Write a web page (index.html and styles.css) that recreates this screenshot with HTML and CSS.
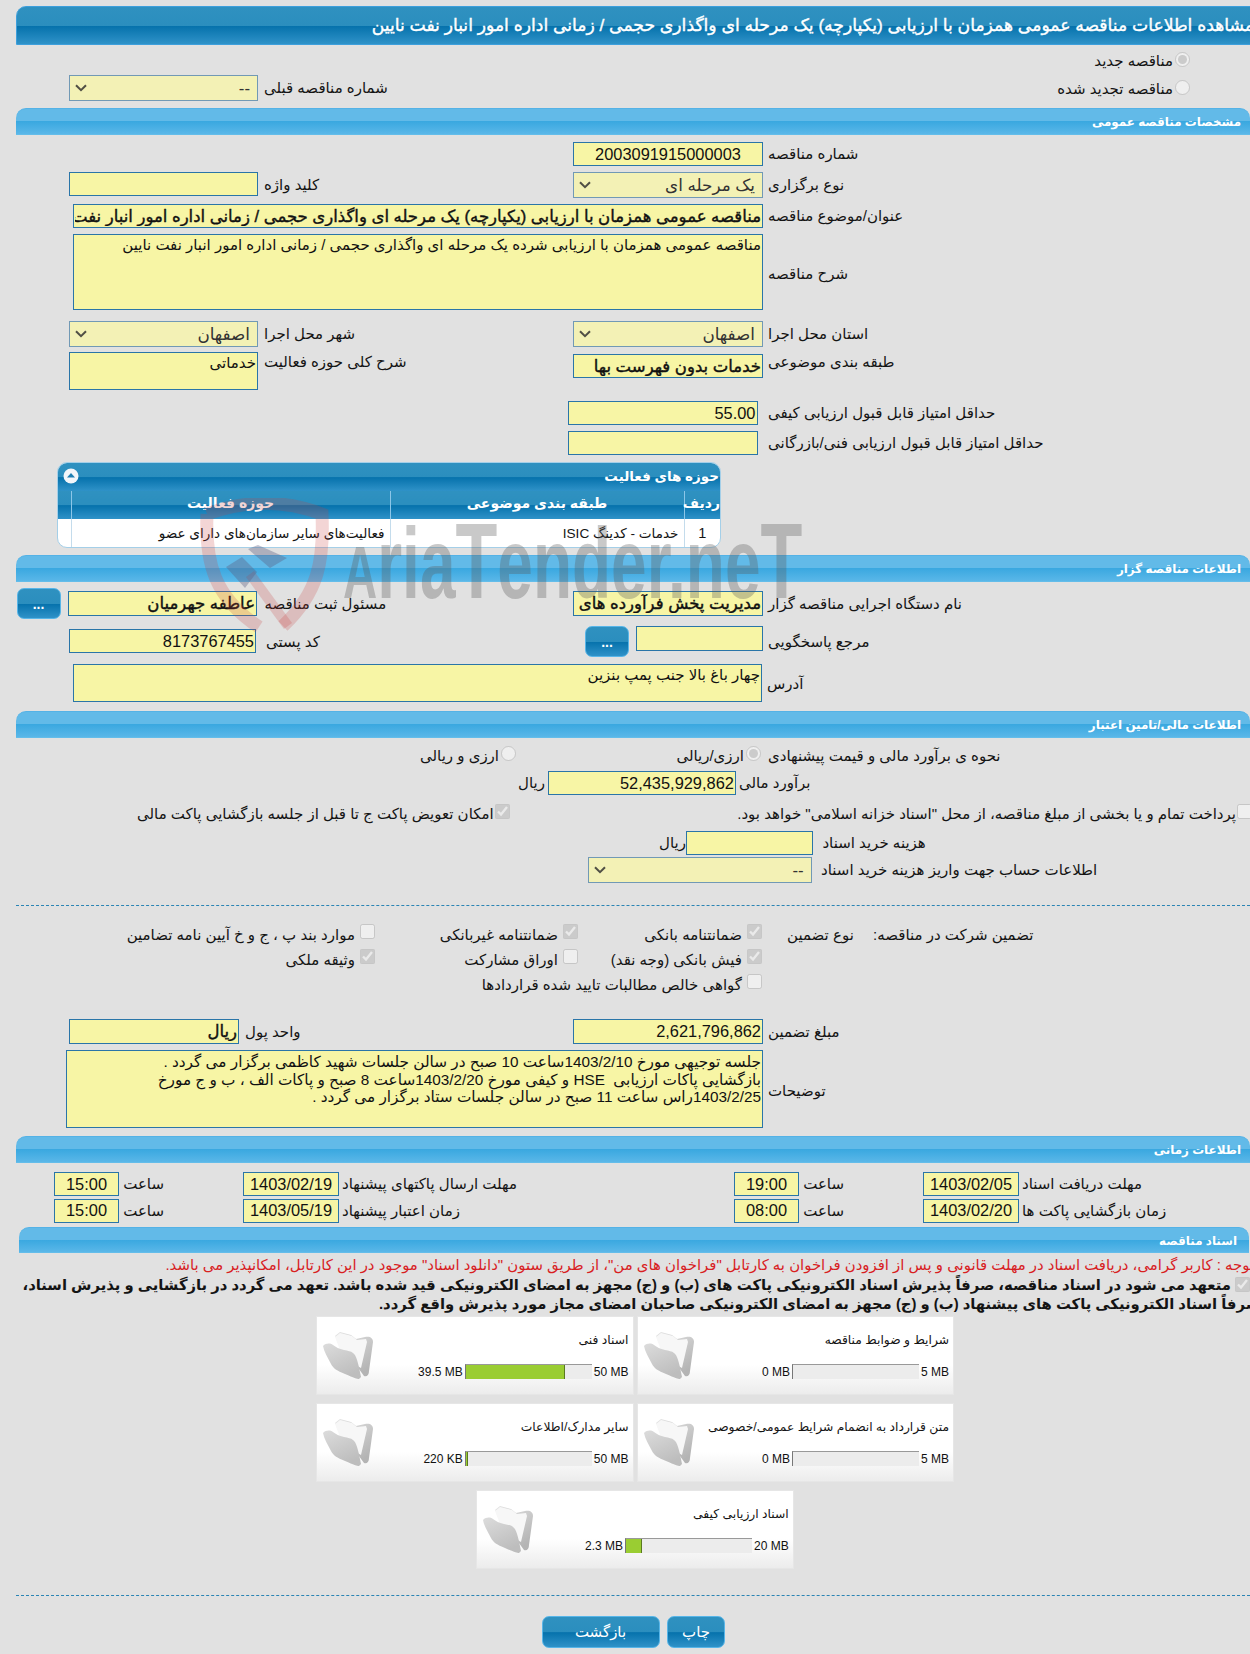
FILE: index.html
```html
<!DOCTYPE html>
<html lang="fa" dir="rtl">
<head>
<meta charset="utf-8">
<title>مشاهده اطلاعات مناقصه</title>
<link rel="stylesheet" href="styles.css">
</head>
<body>
<div class="page">
  <h1 class="topbar">مشاهده اطلاعات مناقصه عمومی همزمان با ارزیابی (یکپارچه) یک مرحله ای واگذاری حجمی / زمانی اداره امور انبار نفت نایین</h1>

  <div class="row r-radio1">
    <div class="cell pr-radio"><input type="radio" disabled checked><span class="lab">مناقصه جدید</span></div>
  </div>
  <div class="row r-radio2">
    <div class="cell pr-radio up"><input type="radio" disabled><span class="lab">مناقصه تجدید شده</span></div>
    <div class="cell left"><span class="lab">شماره مناقصه قبلی</span><select class="sel w189" disabled><option>--</option></select></div>
  </div>

  <h2 class="bar">مشخصات مناقصه عمومی</h2>
  <div class="row mt7 h24">
    <div class="cell right"><span class="lab">شماره مناقصه</span><input class="in w190 c" readonly value="2003091915000003"></div>
  </div>
  <div class="row mt6 h26">
    <div class="cell right"><span class="lab">نوع برگزاری</span><select class="sel w190" disabled><option>یک مرحله ای</option></select></div>
    <div class="cell left top"><span class="lab lab-k">کلید واژه</span><input class="in w189" readonly></div>
  </div>
  <div class="row mt6 h24">
    <div class="cell wide"><span class="lab">عنوان/موضوع مناقصه</span><input class="in w690 b" readonly value="مناقصه عمومی همزمان با ارزیابی (یکپارچه) یک مرحله ای واگذاری حجمی / زمانی اداره امور انبار نفت نایین"></div>
  </div>
  <div class="row mt6 h76">
    <div class="cell wide"><span class="lab lab-d">شرح مناقصه</span><textarea class="in w690 ta" readonly>مناقصه عمومی همزمان با ارزیابی شرده یک مرحله ای واگذاری حجمی / زمانی اداره امور انبار نفت نایین</textarea></div>
  </div>
  <div class="row mt11 h26">
    <div class="cell right"><span class="lab">استان محل اجرا</span><select class="sel w190" disabled><option>اصفهان</option></select></div>
    <div class="cell left"><span class="lab">شهر محل اجرا</span><select class="sel w189" disabled><option>اصفهان</option></select></div>
  </div>
  <div class="row mt5 h38">
    <div class="cell right top"><span class="lab lab-t">طبقه بندی موضوعی</span><input class="in w190 b ofs2" readonly value="خدمات بدون فهرست بها"></div>
    <div class="cell left top"><span class="lab lab-t">شرح کلی حوزه فعالیت</span><textarea class="in w189 h38 ta" readonly>خدماتی</textarea></div>
  </div>
  <div class="row mt11 h24">
    <div class="cell right nudge"><span class="lab">حداقل امتیاز قابل قبول ارزیابی کیفی</span><input class="in w190" readonly value="55.00"></div>
  </div>
  <div class="row mt5 h25">
    <div class="cell right nudge"><span class="lab">حداقل امتیاز قابل قبول ارزیابی فنی/بازرگانی</span><input class="in w190" readonly></div>
  </div>

  <section class="panel">
    <div class="panel-head">
      <span>حوزه های فعالیت</span>
      <svg class="toggle" viewBox="0 0 16 16" width="16" height="16"><circle cx="8" cy="8" r="7.5" fill="#f2f6fa"/><path d="M4 9.5 8 5l4 4.5z" fill="#1f7fb3"/></svg>
    </div>
    <table class="grid">
      <colgroup><col class="c1"><col class="c2"><col class="c3"><col></colgroup>
      <thead><tr><th>ردیف</th><th>طبقه بندی موضوعی</th><th>حوزه فعالیت</th><th></th></tr></thead>
      <tbody><tr><td class="mid">1</td><td>خدمات - کدینگ ISIC</td><td>فعالیت‌های سایر سازمان‌های دارای عضو</td><td></td></tr></tbody>
    </table>
  </section>

  <h2 class="bar mt7">اطلاعات مناقصه گزار</h2>
  <div class="row mt6 h31">
    <div class="cell right"><span class="lab">نام دستگاه اجرایی مناقصه گزار</span><input class="in w190 h25 b" readonly value="مدیریت پخش فرآورده های نفتی اصفهان"></div>
    <div class="cell left btnpad"><span class="lab">مسئول ثبت مناقصه</span><input class="in w189 h25 b" readonly value="عاطفه جهرمیان"><button class="btn dots">...</button></div>
  </div>
  <div class="row mt7 h32">
    <div class="cell right top resp"><span class="lab lab-m">مرجع پاسخگویی</span><input class="in w127 h25" readonly><button class="btn dots">...</button></div>
    <div class="cell left top"><span class="lab lab-m2">کد پستی</span><input class="in w187 ofs3" readonly value="8173767455"></div>
  </div>
  <div class="row mt6 h38">
    <div class="cell wide"><span class="lab lab-a">آدرس</span><textarea class="in w689 h38 ta" readonly>چهار باغ بالا جنب پمپ بنزین</textarea></div>
  </div>

  <h2 class="bar mt9">اطلاعات مالی/تامین اعتبار</h2>
  <div class="row s500 mt6 h24">
    <div class="cell c-est"><span class="lab">نحوه ی برآورد مالی و قیمت پیشنهادی</span><span class="opt o-a"><input type="radio" disabled checked><span class="lab">ارزی/ریالی</span></span></div>
    <div class="cell c-est2"><span class="opt"><input type="radio" disabled><span class="lab">ارزی و ریالی</span></span></div>
  </div>
  <div class="row s500 mt3 h24">
    <div class="cell c-fin"><span class="lab">برآورد مالی</span><input class="in w188" readonly value="52,435,929,862"><span class="lab">ریال</span></div>
  </div>
  <div class="row s520 mt6 h26">
    <div class="cell c-pay"><input type="checkbox" disabled><span class="lab">پرداخت تمام و یا بخشی از مبلغ مناقصه، از محل "اسناد خزانه اسلامی" خواهد بود.</span></div>
    <div class="cell c-swap"><input type="checkbox" disabled checked><span class="lab">امکان تعویض پاکت ج تا قبل از جلسه بازگشایی پاکت مالی</span></div>
  </div>
  <div class="row s500 mt3 h25">
    <div class="cell c-doc"><span class="lab">هزینه خرید اسناد</span><input class="in w127" readonly><span class="lab">ریال</span></div>
  </div>
  <div class="row s500 mt2 h26">
    <div class="cell c-acc"><span class="lab">اطلاعات حساب جهت واریز هزینه خرید اسناد</span><select class="sel w224" disabled><option>--</option></select></div>
  </div>
  <hr class="dash d1">

  <div class="guar">
    <span class="lab g1">تضمین شرکت در مناقصه:</span>
    <span class="lab g2">نوع تضمین</span>
    <label class="chk"><input type="checkbox" disabled checked><span class="lab">ضمانتنامه بانکی</span></label>
    <label class="chk"><input type="checkbox" disabled checked><span class="lab">ضمانتنامه غیربانکی</span></label>
    <label class="chk"><input type="checkbox" disabled><span class="lab">موارد بند پ ، ج و خ آیین نامه تضامین</span></label>
    <span></span><span></span>
    <label class="chk"><input type="checkbox" disabled checked><span class="lab">فیش بانکی (وجه نقد)</span></label>
    <label class="chk"><input type="checkbox" disabled><span class="lab">اوراق مشارکت</span></label>
    <label class="chk"><input type="checkbox" disabled checked><span class="lab">وثیقه ملکی</span></label>
    <span></span><span></span>
    <label class="chk span3"><input type="checkbox" disabled><span class="lab">گواهی خالص مطالبات تایید شده قراردادها</span></label>
  </div>

  <div class="row mt22 h25">
    <div class="cell right"><span class="lab">مبلغ تضمین</span><input class="in w190 h25" readonly value="2,621,796,862"></div>
    <div class="cell left"><span class="lab">واحد پول</span><input class="in w170 h25 b" readonly value="ریال"></div>
  </div>
  <div class="row mt6 h78">
    <div class="cell wide tall"><span class="lab">توضیحات</span><textarea class="in w697 ta ta2" readonly>جلسه توجیهی مورخ 1403/2/10ساعت 10 صبح در سالن جلسات شهید کاظمی برگزار می گردد .
بازگشایی پاکات ارزیابی  HSE و کیفی مورخ 1403/2/20ساعت 8 صبح و پاکات الف ، ب و ج مورخ
1403/2/25راس ساعت 11 صبح در سالن جلسات ستاد برگزار می گردد .</textarea></div>
  </div>

  <h2 class="bar mt8">اطلاعات زمانی</h2>
  <div class="row s700 mt9 h24">
    <div class="cell tr"><span class="lab">مهلت دریافت اسناد</span><input class="in date" readonly value="1403/02/05"><span class="lab saat">ساعت</span><input class="in time" readonly value="19:00"></div>
    <div class="cell tl"><span class="lab">مهلت ارسال پاکتهای پیشنهاد</span><input class="in date" readonly value="1403/02/19"><span class="lab saat">ساعت</span><input class="in time" readonly value="15:00"></div>
  </div>
  <div class="row s700 mt2 h25">
    <div class="cell tr"><span class="lab">زمان بازگشایی پاکت ها</span><input class="in date" readonly value="1403/02/20"><span class="lab saat">ساعت</span><input class="in time" readonly value="08:00"></div>
    <div class="cell tl"><span class="lab">زمان اعتبار پیشنهاد</span><input class="in date" readonly value="1403/05/19"><span class="lab saat">ساعت</span><input class="in time" readonly value="15:00"></div>
  </div>

  <h2 class="bar bar-doc">اسناد مناقصه</h2>
  <p class="notice">توجه : کاربر گرامی، دریافت اسناد در مهلت قانونی و پس از افزودن فراخوان به کارتابل "فراخوان های من"، از طریق ستون "دانلود اسناد" موجود در این کارتابل، امکانپذیر می باشد.</p>
  <p class="pledge"><input type="checkbox" disabled checked> متعهد می شود در اسناد مناقصه، صرفاً پذیرش اسناد الکترونیکی پاکت های (ب) و (ج) مجهز به امضای الکترونیکی قید شده باشد. تعهد می گردد در بازگشایی و پذیرش اسناد،<br>صرفاً اسناد الکترونیکی پاکت های پیشنهاد (ب) و (ج) مجهز به امضای الکترونیکی صاحبان امضای مجاز مورد پذیرش واقع گردد.</p>

  <svg class="defs" width="0" height="0" aria-hidden="true">
    <defs>
      <linearGradient id="fb" x1="0" y1="0" x2="0.6" y2="1"><stop offset="0" stop-color="#e4e4e4"/><stop offset="1" stop-color="#b4b4b4"/></linearGradient>
      <linearGradient id="ff" x1="0" y1="0" x2="0.5" y2="1"><stop offset="0" stop-color="#dcdcdc"/><stop offset="1" stop-color="#bdbdbd"/></linearGradient>
      <symbol id="folder" viewBox="0 0 54 50">
        <path d="M14 6 19 2l11 3 5 4 9-2c5-1 8 1 8 5l-4 29c0 4-2 6-5 5z" fill="url(#fb)"/>
        <path d="M14 7 19 3l12 3 5 4 9-1 1 3-6 26-18-10z" fill="#f7f7f7"/>
        <path d="M2 16c3-3 7-3 10-1 3 2 6 4 11 5 4 1 7 1 9 3 3 2 5 8 8 24l-2 2c-2 0-5-1-14-5-8-3-12-6-14-10C7 28 3 22 2 16z" fill="url(#ff)"/>
      </symbol>
    </defs>
  </svg>

  <div class="files">
    <article class="card"><svg class="ficon"><use href="#folder"/></svg><div class="card-body"><div class="card-title">شرایط و ضوابط مناقصه</div><div class="meter"><span class="mx">5 MB</span><span class="track"></span><span class="mn">0 MB</span></div></div></article>
    <article class="card"><svg class="ficon"><use href="#folder"/></svg><div class="card-body"><div class="card-title">اسناد فنی</div><div class="meter"><span class="mx">50 MB</span><span class="track"><i class="fill" style="width:79%"></i></span><span class="mn">39.5 MB</span></div></div></article>
    <article class="card"><svg class="ficon"><use href="#folder"/></svg><div class="card-body"><div class="card-title">متن قرارداد به انضمام شرایط عمومی/خصوصی</div><div class="meter"><span class="mx">5 MB</span><span class="track"></span><span class="mn">0 MB</span></div></div></article>
    <article class="card"><svg class="ficon"><use href="#folder"/></svg><div class="card-body"><div class="card-title">سایر مدارک/اطلاعات</div><div class="meter"><span class="mx">50 MB</span><span class="track"><i class="fill" style="width:1.6%"></i></span><span class="mn">220 KB</span></div></div></article>
    <article class="card"><svg class="ficon"><use href="#folder"/></svg><div class="card-body"><div class="card-title">اسناد ارزیابی کیفی</div><div class="meter"><span class="mx">20 MB</span><span class="track"><i class="fill" style="width:12.6%"></i></span><span class="mn">2.3 MB</span></div></div></article>
  </div>

  <hr class="dash d2">
  <div class="actions"><button class="btn act print">چاپ</button><button class="btn act back">بازگشت</button></div>

  <div class="watermark" aria-hidden="true">
    <svg class="shield" viewBox="0 0 130 135" width="130" height="135">
      <path d="M7 16C45 2 85 2 122 16c2 46-3 78-39 112M7 16c-2 50 8 84 52 113" fill="none" stroke="#c8403f" stroke-opacity=".22" stroke-width="13"/>
      <path d="M50 76 88 128" fill="none" stroke="#c8403f" stroke-opacity=".22" stroke-width="10"/>
      <path d="M26 69 42 59 57 74 45 90zM48 51 58 47 87 60 70 70z" fill="#5d5f80" fill-opacity=".38"/>
    </svg>
    <div class="mark" dir="ltr"><span class="cap-a">A</span>ria<span class="cap-t">T</span>ender.ne<span class="cap-t">T</span></div>
  </div>
</div>
</body>
</html>
```
FILE: styles.css
```css
* { box-sizing: border-box; }
html, body { margin: 0; padding: 0; overflow-x: hidden; }
body {
  background: #e1e1e1;
  color: #141414;
  font-family: "Liberation Sans", "DejaVu Sans", sans-serif;
  font-size: 14px;
}
.page { position: relative; width: 1250px; padding-top: 6px; padding-bottom: 7px; direction: rtl; overflow: hidden; }

.topbar {
  margin: 0 -16px 0 0;
  width: 1250px;
  height: 39px;
  padding: 0 11px 0 0;
  line-height: 37px;
  color: #fff;
  font-size: 17.2px;
  font-weight: normal;
  -webkit-text-stroke: .4px #fff;
  white-space: nowrap;
  overflow: hidden;
  border: 1px solid #3d9fdc;
  border-radius: 10px 0 0 0;
  background: linear-gradient(#2f91c0 0, #2b8ebe 50%, #0672ac 52%, #2f92c8 100%);
}
.bar {
  margin: 0;
  width: 1234px;
  height: 27px;
  padding: 0 9px 0 0;
  line-height: 26px;
  color: #fff;
  font-size: 11.9px;
  font-weight: bold;
  border-radius: 10px 10px 0 0;
  border-top: 1px solid #54b2e6;
  border-bottom: 1px solid #63bdea;
  background: linear-gradient(#62bae8 0, #62bae8 48%, #3aa8e0 50%, #5ab7e8 100%);
}
.bar-doc { margin: 4px 1px 0 0; width: 1230px; height: 26px; padding-right: 12px; }

.row { display: grid; grid-template-columns: 700px 550px; }
.s500 { grid-template-columns: 750px 500px; }
.s520 { grid-template-columns: 730px 520px; }
.s700 { grid-template-columns: 550px 700px; }
.cell { display: flex; justify-content: flex-end; align-items: center; min-width: 0; }
.cell.top { align-items: flex-start; }
.right { padding-left: 23px; gap: 5px; }
.left { padding-left: 69px; gap: 6px; }
.wide { grid-column: 1 / -1; padding-left: 73px; gap: 5px; }
.wide.tall { padding-left: 66px; }
.nudge { padding-left: 17.5px; gap: 10.5px; }
.tall .lab { margin-top: 4px; }

.mt2 { margin-top: 2px; } .mt3 { margin-top: 3px; } .mt5 { margin-top: 5px; } .mt6 { margin-top: 6px; }
.mt7 { margin-top: 7px; } .mt8 { margin-top: 8px; } .mt9 { margin-top: 9px; } .mt11 { margin-top: 11px; }
.mt22 { margin-top: 22px; }
.h24 { height: 24px; } .h25 { height: 25px; } .h26 { height: 26px; } .h31 { height: 31px; }
.h32 { height: 32px; } .h38 { height: 38px; } .h76 { height: 76px; } .h78 { height: 78px; }

.lab { font-size: 15px; white-space: nowrap; line-height: 18px; }
.lab-t { margin-top: 1px; }
.lab-k { margin-top: 4px; }
.lab-d { margin-top: 4px; }
.lab-a { margin-top: 2px; }
.lab-m { margin-top: 7px; }
.lab-m2 { margin-top: 7px; margin-left: 4px; }

.r-radio1 { height: 28px; }
.r-radio2 { height: 30px; margin-bottom: 5px; }
.r-radio1 .cell, .r-radio2 .cell.pr-radio { grid-column: 1; }
.pr-radio { justify-content: flex-start; padding-right: 60px; gap: 2px; }
.pr-radio.up { padding-bottom: 2px; }
.pr-radio .lab { margin-top: 4px; }
input[type="radio"], input[type="checkbox"] { width: 15px; height: 15px; margin: 0; flex: none; }

.in {
  height: 24px;
  padding: 0 1px;
  background: #f7f5a5;
  border: 1px solid #2a75a8;
  border-radius: 0;
  color: #111;
  font-family: inherit;
  font-size: 16.4px;
  direction: rtl;
  outline: none;
}
.c { text-align: center; }
.b { font-weight: normal; font-size: 16.5px; -webkit-text-stroke: .4px #111; }
.h25 { height: 25px; }
.ta { height: 76px; resize: none; font-size: 15px; line-height: 16px; padding: 2px 1px; overflow: hidden; }
.ta.h38 { height: 38px; }
.ta2 { height: 78px; font-size: 15.3px; line-height: 17.5px; }
.ofs2 { margin-top: 2px; }
.ofs3 { margin-top: 3px; }
.w127 { width: 127px; } .w170 { width: 170px; } .w187 { width: 187px; } .w188 { width: 188px; }
.w189 { width: 189px; } .w190 { width: 190px; } .w224 { width: 224px; } .w689 { width: 689px; }
.w690 { width: 690px; } .w697 { width: 697px; }

.sel {
  appearance: none;
  -webkit-appearance: none;
  height: 26px;
  padding: 0 7px 0 30px;
  background-color: #f3f1b5;
  background-image: url("data:image/svg+xml,%3Csvg xmlns='http://www.w3.org/2000/svg' width='12' height='8'%3E%3Cpath d='M1 1.2 6 6.2l5-5' fill='none' stroke='%23504f45' stroke-width='2'/%3E%3C/svg%3E");
  background-repeat: no-repeat;
  background-position: 5px center;
  border: 1px solid #7199b5;
  border-radius: 0;
  color: #333;
  opacity: 1;
  font-family: inherit;
  font-size: 16.8px;
  direction: rtl;
}

.panel {
  margin: 7px 529px 0 0;
  width: 664px;
  height: 86px;
  border: 1px solid #a4cfe8;
  border-radius: 10px;
  overflow: hidden;
  background: #fff;
}
.panel-head {
  display: flex;
  justify-content: space-between;
  align-items: center;
  height: 28px;
  padding: 0 1px 2px 5px;
  color: #fff;
  font-size: 13.5px;
  font-weight: bold;
  background: linear-gradient(#2f91c0 0, #2b8ebe 50%, #0672ac 52%, #2f92c8 100%);
}
.grid { width: 100%; border-collapse: collapse; table-layout: fixed; }
.c1 { width: 36px; } .c2 { width: 294px; } .c3 { width: 319px; }
.grid th {
  height: 28px;
  padding: 0 0 4px;
  border-right: 1px solid #8cc6e8;
  color: #fff;
  font-size: 14px;
  background: linear-gradient(#2f91c0 0, #2b8ebe 50%, #0672ac 52%, #2f92c8 100%);
}
.grid th:first-child, .grid td:first-child { border-right: 0; }
.grid td {
  height: 28px;
  padding: 0 5px 0 0;
  border-right: 1px solid #c4dcec;
  font-size: 13.6px;
  white-space: nowrap;
}
.grid td.mid { padding: 0; text-align: center; font-size: 14.5px; }

.btn {
  border: 1px solid #57b5e8;
  border-radius: 7px;
  color: #fff;
  font-family: inherit;
  padding: 0;
  background: linear-gradient(#2f91c0 0, #2b8ebe 50%, #0672ac 52%, #2f92c8 100%);
}
.dots { width: 44px; height: 31px; font-size: 14px; font-weight: bold; line-height: 31px; flex: none; }
.btnpad { padding-left: 16.5px; gap: 7.5px; }
.resp { padding-left: 35px; gap: 5px; }
.resp .btn { margin-right: 2px; }

.c-est { padding-left: 173px; gap: 5px; }
.opt { display: flex; align-items: center; gap: 2px; }
.opt input { margin-top: -6px; }
.o-a { width: 90px; padding-right: 2px; }
.c-est2 { padding-left: 420px; }
.c-fin { padding-left: 18px; gap: 3px; }
.c-pay { justify-content: flex-start; gap: 1px; margin-right: -2px; }
.c-swap { padding-left: 137px; gap: 1px; }
.c-swap input, .c-pay input { margin-top: -6px; }
.c-doc { padding-left: 159px; }
.c-doc .in { margin-right: 9.5px; }
.c-acc { padding-left: 87.6px; gap: 9.5px; }

.dash { border: 0; border-top: 1px dashed #2a84b4; margin: 0; width: 1234px; height: 0; }
.d1 { margin-top: 22px; }
.d2 { margin-top: 26px; }

.guar {
  display: grid;
  margin-top: 16px;
  grid-template-columns: 377px 111px 184px 203px 275px;
  grid-auto-rows: 25px;
  align-items: center;
}
.g1 { text-align: left; }
.g2 { text-align: left; padding-left: 25px; }
.chk { display: flex; align-items: center; gap: 5px; }
.chk input { margin-top: -6px; }
.span3 { grid-column: 3 / 6; }

.tr { padding-left: 34px; }
.tl { padding-left: 54px; }
.date { width: 96px; height: 24px; margin-right: 3px; text-align: center; }
.time { width: 65px; height: 24px; margin-right: 3px; text-align: center; }
.saat { width: 42px; margin-right: 79px; }

.notice {
  margin: 3px -4px 0 0;
  height: 19px;
  color: #d8201f;
  font-size: 14.9px;
  line-height: 19px;
  white-space: nowrap;
}
.pledge {
  margin: 1px -10px 0 0;
  text-indent: 10px;
  font-size: 14.8px;
  font-weight: bold;
  line-height: 19px;
  white-space: nowrap;
}
.pledge input { vertical-align: -2px; }

.defs { position: absolute; }
.files {
  display: flex;
  flex-wrap: wrap;
  justify-content: center;
  gap: 8px 3px;
  margin: 2px 296px 0 0;
  width: 638px;
}
.card {
  display: flex;
  flex-direction: row-reverse;
  justify-content: space-between;
  width: 317.5px;
  height: 79px;
  padding: 13px 4px 0;
  border: 1px solid #e6e6e6;
  background: linear-gradient(#fff 0, #fff 62%, #ececec 100%);
}
.ficon { width: 54px; height: 50px; flex: none; margin-left: 0; }
.card-body { flex: 1; margin-top: -7px; }
.card-title { height: 26px; font-size: 12.3px; line-height: 26px; white-space: nowrap; padding-top: 4px; }
.meter { display: flex; align-items: center; gap: 2px; margin-top: 15px; font-size: 12px; color: #111; direction: rtl; }
.mx { direction: ltr; white-space: nowrap; }
.mn { direction: ltr; white-space: nowrap; }
.track {
  position: relative;
  display: block;
  width: 127px;
  height: 15px;
  background: #ececec;
  border-top: 1px solid #999;
  border-left: 1px solid #777;
  direction: ltr;
}
.fill { display: block; height: 100%; background: #9acd32; border-right: 1px solid #5a7a20; }

.actions { display: flex; gap: 7.5px; margin: 20px 525px 0 0; }
.act { height: 32px; font-size: 15px; }
.print { width: 58px; }
.back { width: 118px; }

.watermark { position: absolute; left: 200px; top: 498px; width: 610px; height: 140px; pointer-events: none; }
.shield { position: absolute; left: 0; top: 0; }
.mark {
  position: absolute;
  left: 143px;
  top: 4px;
  color: rgba(90, 90, 90, .33);
  font-family: "Liberation Sans", sans-serif;
  font-size: 100px;
  font-weight: bold;
  line-height: 118px;
  white-space: nowrap;
  transform-origin: 0 0;
  transform: scaleX(.64);
}
.cap-a { font-size: 74px; }
.cap-t { font-size: 107px; }
```
